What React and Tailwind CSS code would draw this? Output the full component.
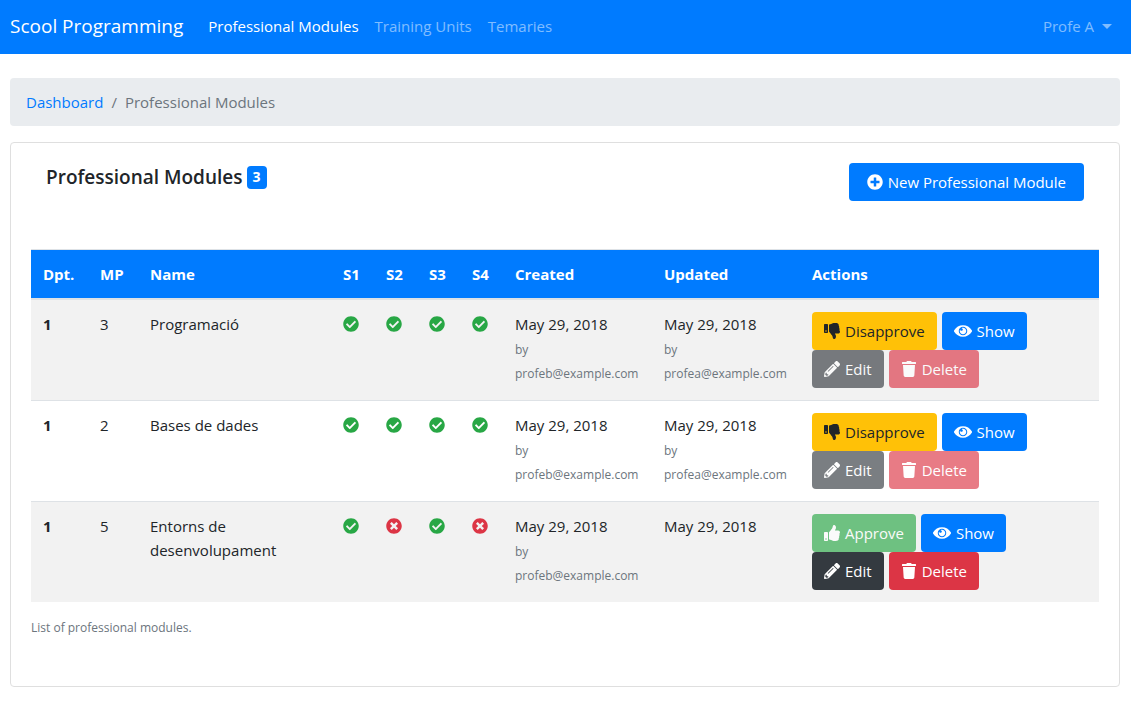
import { FaCheckCircle, FaTimesCircle, FaPlusCircle, FaThumbsDown, FaThumbsUp, FaPencilAlt, FaTrash } from "react-icons/fa";

const navItems = ["Training Units", "Temaries"];

const modules = [
  { dpt: 1, mp: 3, name: "Programació", s: [true, true, true, true], created: "profeb@example.com", updated: "profea@example.com", approved: true },
  { dpt: 1, mp: 2, name: "Bases de dades", s: [true, true, true, true], created: "profeb@example.com", updated: "profea@example.com", approved: true },
  { dpt: 1, mp: 5, name: "Entorns de desenvolupament", s: [true, false, true, false], created: "profeb@example.com", updated: null, approved: false },
];

function EyeIcon({ className }) {
  return (
    <svg viewBox="0 0 576 512" fill="currentColor" aria-hidden="true" className={className}>
      <path d="M569.354 231.631C512.969 135.949 407.81 72 288 72 168.14 72 63.004 135.994 6.646 231.631a47.999 47.999 0 0 0 0 48.739C63.031 376.051 168.19 440 288 440c119.86 0 224.996-63.994 281.354-159.631a47.997 47.997 0 0 0 0-48.738zM288 392c-75.162 0-136-60.827-136-136 0-75.162 60.826-136 136-136 75.162 0 136 60.826 136 136 0 75.162-60.826 136-136 136zm104-136c0 57.438-46.562 104-104 104s-104-46.562-104-104c0-17.708 4.431-34.379 12.236-48.973l-.001.032c0 23.651 19.173 42.823 42.824 42.823s42.824-19.173 42.824-42.823c0-23.651-19.173-42.824-42.824-42.824l-.032.001C253.621 156.431 270.292 152 288 152c57.438 0 104 46.562 104 104z" />
    </svg>
  );
}

function ActionButton({ icon: Icon, iconClass = "h-4 w-4", color, disabled, children }) {
  return (
    <button
      type="button"
      disabled={disabled}
      className={`inline-flex h-[38px] items-center gap-[5px] rounded px-3 ${color} ${disabled ? "opacity-65" : ""}`}
    >
      <Icon className={iconClass} />
      {children}
    </button>
  );
}

function Stamp({ user }) {
  return (
    <>
      <div>May 29, 2018</div>
      {user && (
        <div className="pt-[2px] text-[12px] leading-6 text-[#6c757d]">
          by
          <br />
          {user}
        </div>
      )}
    </>
  );
}

export default function App() {
  return (
    <div className="bg-white font-['Open_Sans',sans-serif] text-[15px] leading-6 text-[#212529]">
      <nav className="flex h-[54px] items-center bg-[#007bff] px-[10px] pb-[2px] text-white/50">
        <a href="#" className="mr-[25px] text-[19px] text-white">Scool Programming</a>
        <div className="flex flex-1 gap-4">
          <a href="#" className="text-white">Professional Modules</a>
          {navItems.map((n) => (
            <a key={n} href="#">{n}</a>
          ))}
        </div>
        <button type="button" className="mr-[9px] flex items-center gap-2">
          Profe A
          <svg viewBox="0 0 10 5" className="h-[5px] w-[10px]" fill="currentColor" aria-hidden="true">
            <path d="M0 0h10L5 5z" />
          </svg>
        </button>
      </nav>

      <main className="pt-6 pr-[11px] pl-[10px]">
        <nav aria-label="Breadcrumb" className="mb-4 flex gap-2 rounded bg-[#e9ecef] px-4 py-3 text-[#6c757d]">
          <a href="#" className="text-[#007bff]">Dashboard</a>
          <span>/</span>
          <span>Professional Modules</span>
        </nav>

        <section className="rounded border border-[#dfdfdf] px-5 pt-5 pb-[46px]">
          <header className="mb-12 flex items-start justify-between px-[15px]">
            <h1 className="flex items-center gap-1 pt-[2px] text-[19px] font-[550]">
              Professional Modules
              <span className="flex h-[23px] items-center rounded bg-[#007bff] px-[6px] text-[14px] font-bold text-white">3</span>
            </h1>
            <button type="button" className="flex h-[38px] items-center gap-[5px] rounded bg-[#007bff] px-[18px] text-white">
              <FaPlusCircle className="h-4 w-4" />
              New Professional Module
            </button>
          </header>

          <table className="w-full table-fixed border-collapse text-left">
            <colgroup>
              <col className="w-[57px]" />
              <col className="w-[50px]" />
              <col className="w-[193px]" />
              <col className="w-[43px]" />
              <col className="w-[43px]" />
              <col className="w-[43px]" />
              <col className="w-[43px]" />
              <col className="w-[149px]" />
              <col className="w-[148px]" />
              <col />
            </colgroup>
            <thead>
              <tr className="border-t border-b-2 border-[#dee2e6] bg-[#007bff] text-white">
                {["Dpt.", "MP", "Name", "S1", "S2", "S3", "S4", "Created", "Updated", "Actions"].map((h) => (
                  <th key={h} scope="col" className="px-3 py-3 font-bold">{h}</th>
                ))}
              </tr>
            </thead>
            <tbody className="align-top">
              {modules.map((m) => (
                <tr key={m.mp} className="border-t border-[#dee2e6] odd:bg-[#f2f2f2]">
                  <th scope="row" className="p-3 font-bold">{m.dpt}</th>
                  <td className="p-3">{m.mp}</td>
                  <td className="p-3">{m.name}</td>
                  {m.s.map((ok, i) => (
                    <td key={i} className="px-3 py-4">
                      {ok ? (
                        <FaCheckCircle role="img" aria-label="Yes" className="h-4 w-4 text-[#28a745]" />
                      ) : (
                        <FaTimesCircle role="img" aria-label="No" className="h-4 w-4 text-[#dc3545]" />
                      )}
                    </td>
                  ))}
                  <td className="p-3"><Stamp user={m.created} /></td>
                  <td className="p-3"><Stamp user={m.updated} /></td>
                  <td className="p-3">
                    <div className="flex max-w-[240px] flex-wrap gap-x-[5px]">
                      {m.approved ? (
                        <ActionButton icon={FaThumbsDown} color="bg-[#ffc107] text-[#212529]">Disapprove</ActionButton>
                      ) : (
                        <ActionButton icon={FaThumbsUp} color="bg-[#28a745] text-white" disabled>Approve</ActionButton>
                      )}
                      <ActionButton icon={EyeIcon} iconClass="h-4 w-[18px]" color="bg-[#007bff] text-white">Show</ActionButton>
                      <ActionButton icon={FaPencilAlt} color="bg-[#343a40] text-white" disabled={m.approved}>Edit</ActionButton>
                      <ActionButton icon={FaTrash} color="bg-[#dc3545] text-white" disabled={m.approved}>Delete</ActionButton>
                    </div>
                  </td>
                </tr>
              ))}
            </tbody>
          </table>
          <p className="pt-[14px] text-[12px] leading-6 text-[#6c757d]">List of professional modules.</p>
        </section>
      </main>
    </div>
  );
}
